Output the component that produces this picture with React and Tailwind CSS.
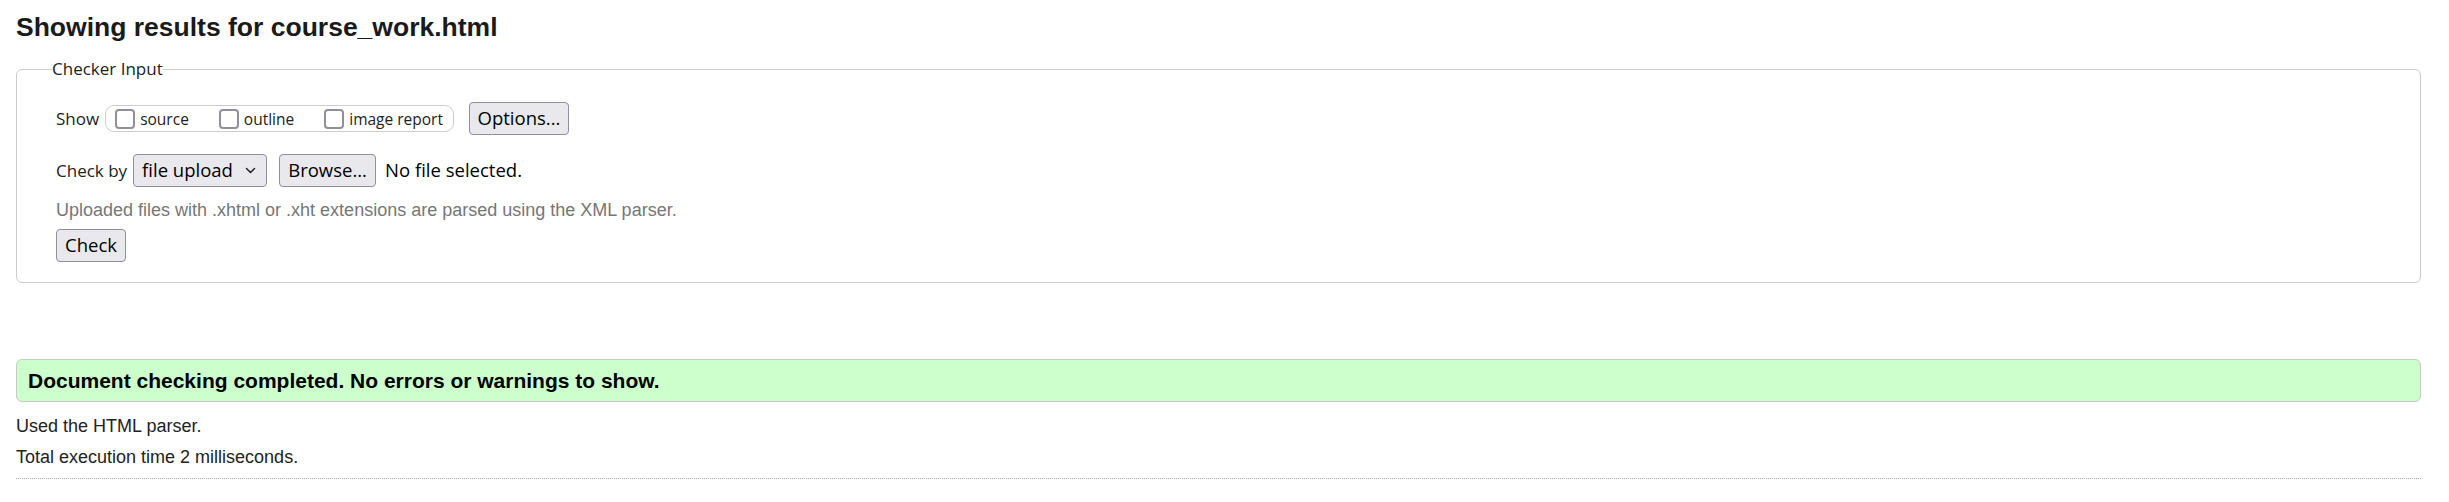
const arial = "font-['Liberation_Sans',Arial,sans-serif]"
const ui = "font-['Open_Sans',sans-serif]"
const btnClass = "h-[33px] rounded-[4px] border border-[#8f8f9d] bg-[#e9e9ed] text-[18.5px] leading-none text-black flex items-center justify-center font-['Open_Sans',sans-serif]"

const Box = ({ label }) => (
  <label className="flex items-center">
    <input type="checkbox" className="appearance-none w-[20px] h-[20px] border-2 border-[#8f8f9d] rounded-[4px] bg-white m-0" />
    <span className="ml-[5px] text-[15.5px] leading-[20px] text-[#222]">{label}</span>
  </label>
)

const Chevron = () => (
  <svg width="11" height="7" viewBox="0 0 11 7" fill="none" stroke="#222" strokeWidth="1.5" strokeLinecap="round" strokeLinejoin="round">
    <path d="M1.5 1.5 5.5 5.5 9.5 1.5" />
  </svg>
)

export default function App() {
  return (
    <div className={`${arial} min-h-[502px] bg-white pl-4 pr-[28px] pt-[12px] text-[#222]`}>
      <h2 className="text-[26.5px] leading-[30px] font-bold text-[#1a1a1a]">Showing results for course_work.html</h2>

      <fieldset className={`${ui} mt-[15px] border border-[#cccccc] rounded-[6px] pl-[39px] pb-[20px]`}>
        <legend className="-ml-[4px] px-0 text-[17px] leading-[24px] text-[#222]">Checker Input</legend>

        <div className="mt-[21px] flex items-center h-[33px]">
          <span className="text-[17px] leading-[20px] text-[#222]">Show</span>
          <div className="ml-[6px] h-[27px] flex items-center gap-[30px] border border-[#cccccc] rounded-[9px] pl-[9px] pr-[10px]">
            <Box label="source" />
            <Box label="outline" />
            <Box label="image report" />
          </div>
          <button type="button" className={`${btnClass} ml-[15px] w-[100px]`}>Options...</button>
        </div>

        <div className="mt-[19px] flex items-center h-[33px]">
          <span className="text-[17px] leading-[20px] text-[#222]">Check by</span>
          <div className={`${btnClass} ml-[6px] w-[134px] !justify-between pl-[8px] pr-[10px]`}>
            <span>file upload</span>
            <Chevron />
          </div>
          <button type="button" className={`${btnClass} ml-[12px] w-[97px]`}>Browse...</button>
          <span className="ml-[9px] text-[18.5px] leading-none text-black">No file selected.</span>
        </div>

        <p className={`${arial} mt-[13px] text-[18px] leading-[20px] text-[#767676]`}>
          Uploaded files with .xhtml or .xht extensions are parsed using the XML parser.
        </p>

        <button type="button" className={`${btnClass} mt-[9px] w-[70px]`}>Check</button>
      </fieldset>

      <div className="mt-[76px] h-[43px] border border-[#c8c8c8] rounded-[6px] bg-[#ccffcc] pl-[11px] flex items-center">
        <span className="text-[21px] leading-[41px] font-bold text-black">Document checking completed. No errors or warnings to show.</span>
      </div>

      <p className="mt-[9px] text-[18px] leading-[31px] text-[#222]">Used the HTML parser.</p>
      <p className="text-[18px] leading-[31px] text-[#222]">Total execution time 2 milliseconds.</p>

      <div className="mt-[5px] border-t border-dotted border-[#a8a8a8]" />
    </div>
  )
}
